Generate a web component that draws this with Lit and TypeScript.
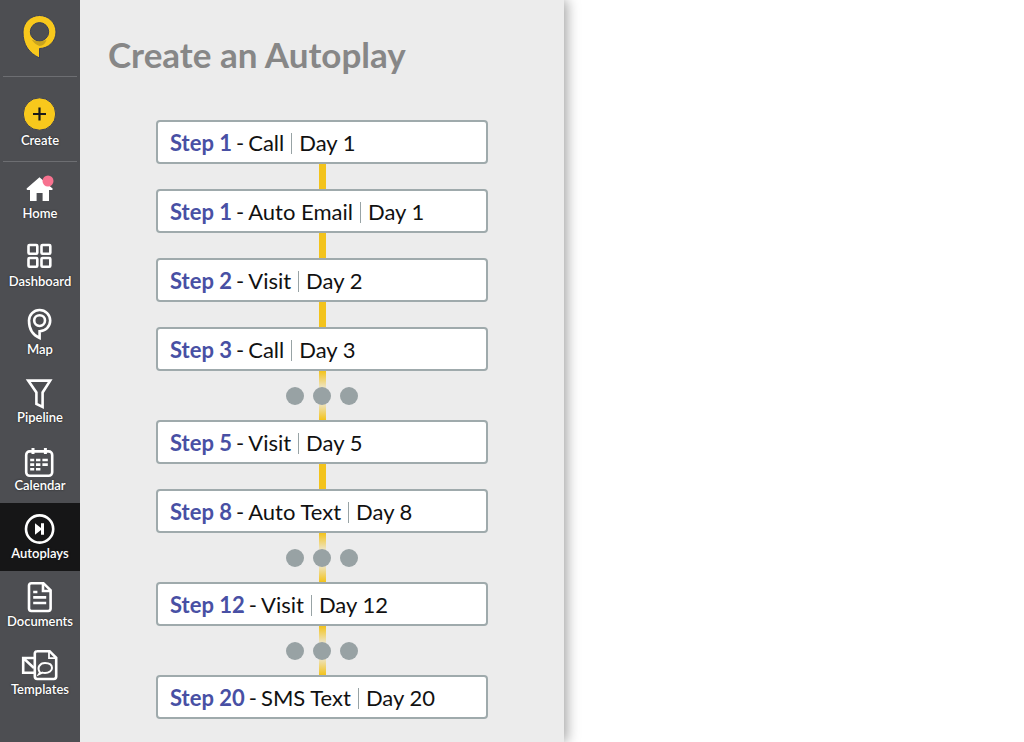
import { LitElement, html, css, svg, nothing } from "lit";
import { customElement } from "lit/decorators.js";
import { classMap } from "lit/directives/class-map.js";

interface NavItem {
  label: string;
  icon: unknown;
  active?: boolean;
}

interface Step {
  step: number;
  action: string;
  day: number;
  /** Steps are left out between this one and the next. */
  skips?: boolean;
}

const icons = {
  home: svg`
    <path fill="#fff" stroke="none" d="M17.5 6.2 4.6 17.6Q4.4 19 5.4 19H8v11h6.6v-8h6v8H27V19h3q1-.2.6-1.4L27 14.4z"/>
    <circle cx="26" cy="10" r="5.5" fill="#f7728f" stroke="none"/>`,
  dashboard: svg`
    <rect x="6.5" y="6" width="8.8" height="8.8" rx="1"/>
    <rect x="19.5" y="6" width="8.8" height="8.8" rx="1"/>
    <rect x="6.5" y="19" width="8.8" height="8.8" rx="1"/>
    <rect x="19.5" y="19" width="8.8" height="8.8" rx="1"/>`,
  map: svg`
    <path d="M17.6 31V24.2A10.6 10.6 0 1 0 7 13.6C7 22 10.5 28 17.6 31z"/>
    <circle cx="17.6" cy="13.6" r="5.4"/>`,
  pipeline: svg`<path d="M6.2 5.6H28.2L20.6 17.5V32L14.4 29V17.5z"/>`,
  calendar: svg`
    <rect x="4.2" y="8.4" width="26" height="24.4" rx="3.5"/>
    <path d="M11 5v6M23.4 5v6" stroke-width="3"/>
    <path stroke-width="2.6" d="M8.2 17h4M14 17h4.4M20.4 17h5.4M8.2 21.6h4M14 21.6h4.4M20.4 21.6h5.4M8.2 26.2h4M14 26.2h4.4"/>`,
  autoplays: svg`
    <circle cx="17.6" cy="18" r="13.6"/>
    <path fill="#fff" stroke="none" d="M13 12.2 19 17v-4.8h3v11.6h-3V19l-6 4.8z"/>`,
  documents: svg`
    <path d="M9.4 4.2H21.4L28.6 11.4V29.6Q28.6 32 26.2 32H9.4Q7 32 7 29.6V6.6Q7 4.2 9.4 4.2z"/>
    <path d="M21 4.2V12H28.6"/>
    <path d="M11.2 13h4.2M11.2 18.4h13M11.2 24h13"/>`,
  templates: svg`
    <path d="M12 11H1.2V25.8H12M1.6 11.4 12 21"/>
    <path d="M15 4.2H27.6L34.2 10.8V29.6Q34.2 32 31.8 32H15.2Q12.8 32 12.8 29.6V6.6Q12.8 4.2 15.2 4.2z"/>
    <path d="M27 4.2V11.2H34.2" stroke-width="1.8"/>
    <path stroke-width="2" d="M18 25.6C14.5 20.5 18 16 23 16S30 18.5 30 21 27 26 23 26Q21.5 26 20.4 25.6L17 27.2z"/>`,
};

const NAV: NavItem[] = [
  { label: "Home", icon: icons.home },
  { label: "Dashboard", icon: icons.dashboard },
  { label: "Map", icon: icons.map },
  { label: "Pipeline", icon: icons.pipeline },
  { label: "Calendar", icon: icons.calendar },
  { label: "Autoplays", icon: icons.autoplays, active: true },
  { label: "Documents", icon: icons.documents },
  { label: "Templates", icon: icons.templates },
];

const STEPS: Step[] = [
  { step: 1, action: "Call", day: 1 },
  { step: 1, action: "Auto Email", day: 1 },
  { step: 2, action: "Visit", day: 2 },
  { step: 3, action: "Call", day: 3, skips: true },
  { step: 5, action: "Visit", day: 5 },
  { step: 8, action: "Auto Text", day: 8, skips: true },
  { step: 12, action: "Visit", day: 12, skips: true },
  { step: 20, action: "SMS Text", day: 20 },
];

@customElement("app-sidebar")
export class AppSidebar extends LitElement {
  static styles = css`
    :host {
      display: block;
      background: #4d4e52;
      color: #fff;
      font-size: 13px;
      font-weight: 600;
      line-height: 16px;
    }
    svg {
      display: block;
      fill: none;
      stroke: #fff;
      stroke-width: 2.6;
      overflow: visible;
    }
    .logo,
    .create-area {
      display: flex;
      justify-content: center;
      margin: 0 3px;
      border-bottom: 1px solid #6d6e72;
    }
    .logo {
      padding: 14px 0 16px;
    }
    .create-area {
      padding: 20px 0 13px;
    }
    .create {
      display: flex;
      flex-direction: column;
      align-items: center;
      gap: 2px;
      padding: 0;
      border: 0;
      background: none;
      color: inherit;
      font: inherit;
      cursor: pointer;
      text-shadow: 0 0 2px #222;
    }
    ul {
      list-style: none;
      margin: 0;
      padding: 1px 0 0;
    }
    .item {
      display: flex;
      flex-direction: column;
      align-items: center;
      padding: 8px 0 10px;
      color: inherit;
      text-decoration: none;
      text-shadow: 0 0 2px #222;
    }
    .active {
      background: #161617;
    }
  `;

  render() {
    return html`
      <div class="logo">
        <svg width="36" height="46" viewBox="0 0 36 46" role="img" aria-label="Home page">
          <path
            fill="#f8c81c"
            stroke="#3a3f55"
            stroke-width="1"
            fill-rule="evenodd"
            d="M17.5 44V34.5A16.5 16.5 0 1 0 1 18C1 31 7 39 17.5 44zM17.5 8.6a9.2 9.2 0 1 1 0 18.4a9.2 9.2 0 0 1 0-18.4z"
          />
          <path fill="#a98a20" stroke="none" opacity=".6" d="M9.5 25.5Q16 28.5 24.5 26Q23 31.5 17.5 32Q13 30.5 9.5 25.5z" />
        </svg>
      </div>
      <div class="create-area">
        <button class="create" type="button">
          <svg width="34" height="33" viewBox="0 0 34 33" aria-hidden="true">
            <circle cx="16.5" cy="17" r="16.2" fill="#f8c81c" stroke="#3a3f55" stroke-width="1" />
            <path d="M16.5 10.5v13M10 17h13" stroke="#1a1a1a" stroke-width="2.2" />
          </svg>
          Create
        </button>
      </div>
      <nav aria-label="Main">
        <ul>
          ${NAV.map(
            (item) => html`<li>
              <a
                class=${classMap({ item: true, active: !!item.active })}
                href="#${item.label.toLowerCase()}"
                aria-current=${item.active ? "page" : nothing}
              >
                <svg width="36" height="34" viewBox="0 0 36 34" aria-hidden="true">${item.icon}</svg>
                ${item.label}
              </a>
            </li>`
          )}
        </ul>
      </nav>
    `;
  }
}

@customElement("step-list")
export class StepList extends LitElement {
  static styles = css`
    :host {
      display: block;
    }
    ol {
      list-style: none;
      margin: 0;
      padding: 0;
    }
    .card {
      display: flex;
      align-items: center;
      gap: 4px;
      padding: 6px 12px 4px;
      border: 2px solid #9faaac;
      border-radius: 4px;
      background: #fff;
      color: #111;
      font-size: 22px;
      line-height: 30px;
    }
    .name {
      color: #4850a4;
      font-weight: 700;
    }
    .bar {
      width: 1px;
      height: 21px;
      margin: 0 3px;
      background: #98a3a5;
    }
    .link {
      width: 7px;
      height: 25px;
      margin: 0 auto;
      background: #f3c31c;
    }
    .gap {
      display: flex;
      align-items: center;
      justify-content: center;
      gap: 9px;
      height: 49px;
      background: linear-gradient(#f3c31c, #f3c31c22 36%, #f3c31c22 64%, #f3c31c) center / 7px 100% no-repeat;
    }
    .dot {
      width: 18px;
      height: 18px;
      border-radius: 50%;
      background: #98a2a4;
    }
  `;

  render() {
    return html`<ol>
      ${STEPS.map(
        (s, i) => html`<li>
          <div class="card">
            <span class="name">Step ${s.step}</span>
            <span>-</span>
            <span>${s.action}</span>
            <span class="bar"></span>
            <span>Day ${s.day}</span>
          </div>
          ${i === STEPS.length - 1
            ? nothing
            : s.skips
              ? html`<div class="gap"><span class="dot"></span><span class="dot"></span><span class="dot"></span></div>`
              : html`<div class="link"></div>`}
        </li>`
      )}
    </ol>`;
  }
}

@customElement("app-root")
export class AppRoot extends LitElement {
  static styles = css`
    :host {
      display: grid;
      grid-template-columns: 80px minmax(0, 484fr) minmax(0, 460fr);
      min-height: 100vh;
      background: #fff;
      font-family: Lato, "Open Sans", sans-serif;
    }
    main {
      padding: 32px 28px 22px;
      background: #ececec;
      box-shadow: 3px 0 12px rgba(0, 0, 0, 0.36);
      clip-path: inset(0 -20px 0 0);
    }
    h1 {
      margin: 0 0 44px;
      color: #878787;
      font-size: 35px;
      font-weight: 700;
      line-height: 44px;
    }
    step-list {
      margin: 0 48px;
    }
  `;

  render() {
    return html`
      <app-sidebar></app-sidebar>
      <main>
        <h1>Create an Autoplay</h1>
        <step-list></step-list>
      </main>
    `;
  }
}
